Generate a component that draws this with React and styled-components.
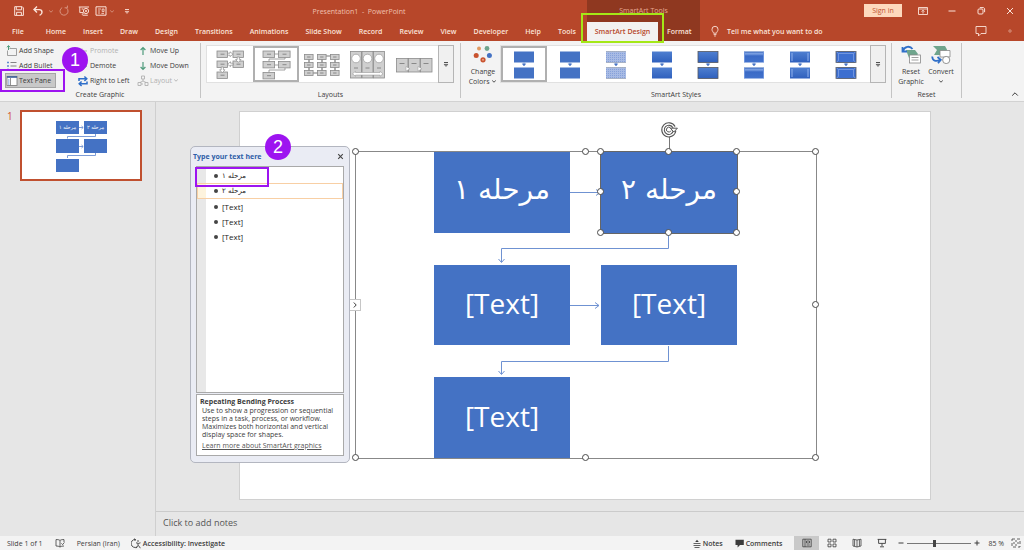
import React from 'react';
import styled, { createGlobalStyle } from 'styled-components';

const tabs = [
    'File', 'Home', 'Insert', 'Draw', 'Design', 'Transitions', 'Animations', 'Slide Show',
    'Record', 'Review', 'View', 'Developer', 'Help', 'Tools',
];

const bullets = [
    { text: 'مرحله ۱', persian: true },
    { text: 'مرحله ۲', persian: true, active: true },
    { text: '[Text]' },
    { text: '[Text]' },
    { text: '[Text]' },
];

const styleKinds = ['flat', 'flat', 'pattern', 'shade', 'outline', 'gloss', 'inset', 'bevel'];

const Icon = ({ w = 12, h = 12, children, ...rest }) => (
    <svg width={w} height={h} viewBox={`0 0 ${w} ${h}`} fill="none" stroke="currentColor" strokeWidth="1" aria-hidden="true" {...rest}>
        {children}
    </svg>
);

const Caret = () => (
    <Icon w={6} h={5}><path d="M1.2 1.5L3 3.2L4.8 1.5" strokeWidth="0.9" /></Icon>
);

const MoreIcon = () => (
    <Icon w={6} h={7}>
        <path d="M1 1.5H5" strokeWidth="0.9" />
        <path d="M1.3 3.4H4.7L3 5.4Z" strokeWidth="0.8" />
    </Icon>
);

const QuickAccess = () => (
    <QuickBar>
        <BarButton aria-label="Save" $w={19}>
            <Icon>
                <path d="M1.7 1.7H9.2L10.4 2.9V10.4H1.7Z" />
                <path d="M3.3 1.9V4.8H8.6V1.9M3.6 10.2V7.3H8.4V10.2" />
            </Icon>
        </BarButton>
        <BarButton aria-label="Undo" $w={19}>
            <Icon>
                <path d="M5 1.6L2 4.6L5 7.6M2.2 4.6H7.2C9 4.6 10 5.6 10 7.2C10 8.6 9 9.7 7.6 10.4" strokeWidth="1.4" />
            </Icon>
        </BarButton>
        <BarButton aria-label="Undo list" $w={7} $faded><Caret /></BarButton>
        <BarButton aria-label="Repeat" $w={20} $faded>
            <Icon>
                <path d="M4.2 2.6A4 4 0 1 0 8.6 3.1" />
                <path d="M6.6 2.8H9.4V0.6" />
            </Icon>
        </BarButton>
        <BarButton aria-label="From beginning" $w={20}>
            <Icon>
                <path d="M0.8 2H11M1.8 2.2V7.6H5M4 9.8L5.6 7.8M3.6 4H5.4" />
                <circle cx="8" cy="6" r="2.6" />
                <circle cx="8" cy="6" r="0.7" />
                <path d="M4.6 10.2H9.8" />
            </Icon>
        </BarButton>
        <BarButton aria-label="Form view" $w={14}>
            <Icon>
                <path d="M1 1.8H11V10.2H1Z" />
                <path d="M3 4H6M3 6H5M3 8H5M7.2 4H9V6.6H7.2Z M6.4 8.4H9" strokeWidth="0.8" />
            </Icon>
        </BarButton>
        <BarButton aria-label="Form view list" $w={8} $faded><Caret /></BarButton>
        <BarButton aria-label="Customize toolbar" $w={22}><MoreIcon /></BarButton>
    </QuickBar>
);

const LayoutThumb = ({ kind }) => {
    const box = (x, y, w, h) => <rect key={`${x}-${y}`} x={x} y={y} width={w} height={h} fill="#cfcfcf" stroke="#8b8b8b" strokeWidth="0.8" />;
    const dash = (x, y, w) => <path key={`d${x}-${y}`} d={`M${x} ${y}h${w}`} stroke="#777" strokeWidth="0.8" />;
    return (
        <Icon w={44} h={35}>
            {kind === 0 && (
                <>
                    {[[9, 4], [25, 4], [9, 14], [25, 14], [9, 25]].map(([x, y]) => [box(x, y, 10.5, 6.4), dash(x + 3.5, y + 3.2, 4)])}
                    <g fill="#fff" stroke="#8b8b8b" strokeWidth="0.7">
                        <path d="M19.5 6.2H22V4.8L25 7.2L22 9.6V8.2H19.5Z" />
                        <path d="M29.2 10H31.4V12.5H33L30.3 15.4L27.6 12.5H29.2Z" />
                        <path d="M25 16.2H22.5V14.8L19.5 17.2L22.5 19.6V18.2H25Z" />
                        <path d="M13.2 20H15.4V22.8H17L14.3 25.8L11.6 22.8H13.2Z" />
                    </g>
                </>
            )}
            {kind === 1 && (
                <>
                    <path d="M20 7H25M31 10V12H15V14.5M20 18H25M31 21V23H15V25.5" stroke="#8b8b8b" strokeWidth="0.8" />
                    {[[9, 4], [24.5, 4], [9, 14.5], [24.5, 14.5], [9, 25.5]].map(([x, y]) => [box(x, y, 11.6, 6.4), dash(x + 4, y + 3.2, 4)])}
                </>
            )}
            {kind === 2 && (
                <>
                    <path d="M9 9V26H22V9H35V26" stroke="#777" strokeWidth="1.2" />
                    {[4.5, 17.5, 30.5].map(x => [7.5, 15.5, 23.5].map(y => [box(x, y, 8.6, 5), dash(x + 2.6, y + 2.5, 3.4)]))}
                </>
            )}
            {kind === 3 && (
                <>
                    {[4.5, 16, 27.5].map(x => (
                        <g key={x}>
                            {box(x, 4.5, 11, 26.5)}
                            <circle cx={x + 5.5} cy="11.5" r="4.3" fill="#fff" stroke="#999" strokeWidth="0.7" />
                            {dash(x + 3.5, 21, 4)}
                        </g>
                    ))}
                    <path d="M6.5 26.8L9.5 24.3V25.5H34V24.3L37 26.8L34 29.3V28.1H9.5V29.3Z" fill="#fff" stroke="#999" strokeWidth="0.6" />
                </>
            )}
            {kind === 4 && (
                <>
                    {[4.5, 16.5, 28.5].map(x => (
                        <g key={x}>
                            {box(x, 11.5, 11.5, 13.5)}
                            {dash(x + 3, 16.5, 5)}
                        </g>
                    ))}
                    <path d="M14 19.5L18 21.8L14 24ZM26 19.5L30 21.8L26 24Z" fill="#fff" stroke="#999" strokeWidth="0.5" />
                </>
            )}
        </Icon>
    );
};

const StyleThumb = ({ kind }) => {
    const fills = { flat: '#4472c4', pattern: 'url(#dots)', shade: 'url(#shade)', outline: 'url(#shade)', gloss: 'url(#gloss)', inset: 'url(#shade)', bevel: '#3d6fd0' };
    return (
        <Icon w={44} h={35}>
            <defs>
                <pattern id="dots" width="2" height="2" patternUnits="userSpaceOnUse">
                    <rect width="2" height="2" fill="#a8bbe4" stroke="none" />
                    <rect width="1" height="1" fill="#86a1da" stroke="none" />
                </pattern>
                <linearGradient id="shade" x1="0" y1="0" x2="0" y2="1">
                    <stop offset="0" stopColor="#4f7fd0" />
                    <stop offset="1" stopColor="#2f60bd" />
                </linearGradient>
                <linearGradient id="gloss" x1="0" y1="0" x2="0" y2="1">
                    <stop offset="0" stopColor="#3463b8" />
                    <stop offset="0.2" stopColor="#7fa3e4" />
                    <stop offset="0.4" stopColor="#3a6ac6" />
                    <stop offset="1" stopColor="#4272cc" />
                </linearGradient>
            </defs>
            {[4.5, 20.5].map(y => (
                <g key={y}>
                    <rect x="12" y={y} width="20" height="11" fill={fills[kind]} stroke={kind === 'outline' || kind === 'bevel' ? '#55585f' : 'none'} strokeWidth="0.8" />
                    {kind === 'pattern' && <path d={`M12 ${y}H32M12 ${y + 11}H32`} stroke="#8c95a8" strokeWidth="0.6" />}
                    {kind === 'bevel' && <path d={`M14.5 ${y + 2}V${y + 9}M29.5 ${y + 2}V${y + 9}M12.5 ${y + 0.5}L14.5 ${y + 2}H29.5L31.5 ${y + 0.5}M12.5 ${y + 10.5}L14.5 ${y + 9}M31.5 ${y + 10.5}L29.5 ${y + 9}`} stroke="#7d9fe2" strokeWidth="0.8" />}
                    {kind === 'inset' && <path d={`M14 ${y + 1.5}V${y + 9.5}M30 ${y + 1.5}V${y + 9.5}`} stroke="#8fb0ee" />}
                    {kind === 'gloss' && <path d={`M12.5 ${y + 10.5}V${y + 0.5}M31.5 ${y + 0.5}V${y + 10.5}`} stroke="#6d94de" />}
                </g>
            ))}
            <path d="M22 15.5V17M20.3 16.8H23.7L22 19Z" fill="#4472c4" stroke="#4472c4" strokeWidth="0.5" />
        </Icon>
    );
};

const CreateGraphic = () => (
    <Group $w={201}>
        <CommandGrid>
            <Command>
                <Icon><path d="M3.5 3.5H10.5V10.5H1.5V5.5" stroke="#8a8a8a" strokeWidth="0.8" /><path d="M2.5 5V0.8M0.8 2.3L2.5 0.7L4.2 2.3" stroke="#4f9b7c" /></Icon>
                Add Shape
            </Command>
            <Command disabled>
                <Icon><path d="M10 6H2.5M5 3.5L2.5 6L5 8.5" /></Icon>
                Promote
            </Command>
            <Command>
                <Icon><path d="M6 10V2.5M3.6 5L6 2.5L8.4 5" stroke="#4f9b7c" strokeWidth="1.2" /></Icon>
                Move Up
            </Command>
            <Command>
                <Icon><path d="M4.5 2.5H10.5M4.5 6H10.5M4.5 9.5H10.5" stroke="#777" strokeWidth="0.9" /><path d="M1.2 2.5H2.8M1.2 6H2.8M1.2 9.5H2.8" stroke="#3b6fc4" strokeWidth="1.6" /></Icon>
                Add Bullet
            </Command>
            <Command>
                <Icon><path d="M2 6H9.5M7 3.5L9.5 6L7 8.5" stroke="#4f9b7c" /></Icon>
                Demote
            </Command>
            <Command>
                <Icon><path d="M6 2V9.5M3.6 7L6 9.5L8.4 7" stroke="#4f9b7c" strokeWidth="1.2" /></Icon>
                Move Down
            </Command>
            <Command $pressed aria-pressed="true">
                <Icon><rect x="1" y="1.5" width="10" height="9" fill="#fff" stroke="#777" strokeWidth="0.8" /><path d="M1 2H11" stroke="#3b5f9c" strokeWidth="1.6" /><path d="M4.5 3V10.5" stroke="#777" strokeWidth="0.8" /><path d="M2 5H3.5M2 7H3.5M2 9H3.5" stroke="#3b6fc4" strokeWidth="0.8" /></Icon>
                Text Pane
            </Command>
            <Command>
                <Icon><path d="M2 6V3.8H9.5M7.4 1.5L9.8 3.8L7.4 6" stroke="#2f6fc9" strokeWidth="1.5" /><path d="M10 6.5V8.8H2.5M4.6 6.5L2.2 8.8L4.6 11" stroke="#2f6fc9" strokeWidth="1.5" /></Icon>
                Right to Left
            </Command>
            <Command disabled>
                <Icon><path d="M4.5 1H7.5V4H4.5ZM1 7.5H4V10.5H1ZM8 7.5H11V10.5H8ZM6 4V6M6 9H4M6 6L3 7.5M6 6L9 7.5" strokeWidth="0.9" /></Icon>
                Layout <Caret />
            </Command>
        </CommandGrid>
        <GroupLabel>Create Graphic</GroupLabel>
        <PaneMark />
        <StepBadge $left={62} $top={4}>1</StepBadge>
    </Group>
);

const Diagram = () => (
    <Frame>
        <Connectors viewBox="0 0 461 306" fill="none" stroke="#6f92d2" aria-hidden="true">
            <path d="M214 40.5H244M240 37.5L244 40.5L240 43.5" />
            <path d="M312.5 82V96.5H145.5V110M142.5 107L145.5 110.5L148.5 107" />
            <path d="M214 153.5H243M239 150.5L243 153.5L239 156.5" />
            <path d="M312.5 194V209.5H145.5V222M142.5 219L145.5 222.5L148.5 219" />
        </Connectors>
        <Nodes>
            <Node $persian dir="rtl">مرحله ۱</Node>
            <Node $persian $selected dir="rtl">
                مرحله ۲
                <RotateStem />
                <RotateHandle w={17} h={16}>
                    <path d="M13.6 8.6A5.8 5.8 0 1 1 13 5.2" stroke="#555" strokeWidth="3.6" />
                    <path d="M13.6 8.6A5.8 5.8 0 1 1 13 5.2" stroke="#fff" strokeWidth="1.4" />
                    <path d="M9.4 6.2H16.4L12.8 10Z" fill="#fff" stroke="#555" />
                    <path d="M10 8.6A2.4 2.4 0 1 1 9.6 6" stroke="#555" />
                </RotateHandle>
                {['0%', '50%', '100%'].map(x => ['0%', '50%', '100%'].map(y => (
                    x === '50%' && y === '50%' ? null : <Handle key={x + y} $x={x} $y={y} />
                )))}
            </Node>
            <Node>[Text]</Node>
            <Node>[Text]</Node>
            <Node>[Text]</Node>
        </Nodes>
        {[['0%', '0%'], ['50%', '0%'], ['100%', '0%'], ['100%', '50%'], ['0%', '100%'], ['50%', '100%'], ['100%', '100%']].map(([x, y]) => (
            <Handle key={x + y} $x={x} $y={y} />
        ))}
        <PaneToggle aria-label="Toggle text pane">
            <Icon w={6} h={8}><path d="M1.8 1.5L4.2 4L1.8 6.5" /></Icon>
        </PaneToggle>
    </Frame>
);

const TextPane = () => (
    <Pane>
        <PaneHeader>
            Type your text here
            <PaneClose aria-label="Close">
                <Icon w={7} h={7}><path d="M1.2 1.2L5.8 5.8M5.8 1.2L1.2 5.8" strokeWidth="1.1" /></Icon>
            </PaneClose>
        </PaneHeader>
        <BulletList>
            {bullets.map((b, i) => (
                <Bullet key={i} $active={b.active} $persian={b.persian}>
                    <span dir={b.persian ? 'rtl' : 'ltr'}>{b.text}</span>
                </Bullet>
            ))}
        </BulletList>
        <About>
            <AboutTitle>Repeating Bending Process</AboutTitle>
            <AboutText>
                Use to show a progression or sequential<br />
                steps in a task, process, or workflow.<br />
                Maximizes both horizontal and vertical<br />
                display space for shapes.
            </AboutText>
            <AboutLink href="#learn">Learn more about SmartArt graphics</AboutLink>
        </About>
        <RowMark />
        <StepBadge $left={74} $top={-13}>2</StepBadge>
    </Pane>
);

const SlideThumb = () => (
    <ThumbButton aria-label="Slide 1">
        <svg viewBox="0 0 118 67" width="118" height="67" aria-hidden="true">
            <g fill="#4472c4">
                <rect x="34" y="9" width="23" height="13" />
                <rect x="62" y="9" width="23" height="13" />
                <rect x="34" y="27" width="23" height="14" />
                <rect x="62" y="27" width="23" height="14" />
                <rect x="34" y="47" width="23" height="13" />
            </g>
            <path d="M57 15.5H61M59.5 14L61.2 15.5L59.5 17M73.5 22V24.5H45.5V26.5M57 34.5H61M59.5 33L61.2 34.5L59.5 36M73.5 41V43.5H45.5V46" fill="none" stroke="#6f92d2" strokeWidth="0.9" />
            <g fill="#fff" fontFamily='"DejaVu Sans", sans-serif' fontSize="5" textAnchor="middle" direction="rtl">
                <text x="45.5" y="17">مرحله ۱</text>
                <text x="73.5" y="17">مرحله ۲</text>
            </g>
        </svg>
    </ThumbButton>
);

const App = () => (
    <Window>
        <GlobalStyle />
        <Header>
            <HeaderMain>
                <TitleRow>
                    <QuickAccess />
                    <Title>Presentation1&nbsp; -&nbsp; PowerPoint</Title>
                </TitleRow>
                <Tabs>
                    {tabs.map(t => <Tab key={t}>{t}</Tab>)}
                </Tabs>
            </HeaderMain>
            <HeaderContext>
                <ContextTitle>SmartArt Tools</ContextTitle>
                <ContextTabs>
                    <ActiveTab>SmartArt Design</ActiveTab>
                    <Tab>Format</Tab>
                </ContextTabs>
                <TabMark />
            </HeaderContext>
            <HeaderSide>
                <WindowRow>
                    <SignIn>Sign in</SignIn>
                    <BarButton aria-label="Ribbon display options" $w={29}>
                        <Icon><path d="M1.5 2.5H10.5V9.5H1.5ZM1.5 4H10.5M6 8.6V5.4M4.6 6.6L6 5.2L7.4 6.6" strokeWidth="0.9" /></Icon>
                    </BarButton>
                    <BarButton aria-label="Minimize" $w={29}><Icon><path d="M2.5 6H9.5" /></Icon></BarButton>
                    <BarButton aria-label="Restore" $w={29}>
                        <Icon><rect x="3" y="4" width="5" height="5" rx="1" /><path d="M4.8 2.6H8C9 2.6 9.6 3.2 9.6 4V7.2" /></Icon>
                    </BarButton>
                    <BarButton aria-label="Close" $w={29}><Icon><path d="M3 3L9 9M9 3L3 9" /></Icon></BarButton>
                </WindowRow>
                <TellRow>
                    <TellMe>
                        <Icon><path d="M4.5 8.2C4.5 7 3 6.4 3 4.3A3 3 0 0 1 9 4.3C9 6.4 7.5 7 7.5 8.2ZM4.6 9.6H7.4M5.2 11H6.8" strokeWidth="0.9" /></Icon>
                        Tell me what you want to do
                    </TellMe>
                    <BarButton aria-label="Comments" $w={29}><Icon><path d="M1 1.5H11V8.5H6L3.5 11V8.5H1Z" strokeWidth="0.9" /></Icon></BarButton>
                    <BarButton aria-label="Feedback" $w={29} $faded><Icon><circle cx="6" cy="6" r="1.2" /></Icon></BarButton>
                </TellRow>
            </HeaderSide>
        </Header>

        <Ribbon>
            <CreateGraphic />
            <Group $w={260}>
                <GalleryRow>
                    <Gallery>
                        {[0, 1, 2, 3, 4].map(k => (
                            <GalleryItem key={k} $selected={k === 1} aria-label={`Layout ${k + 1}`}><LayoutThumb kind={k} /></GalleryItem>
                        ))}
                        <GalleryMore aria-label="More layouts"><MoreIcon /></GalleryMore>
                    </Gallery>
                </GalleryRow>
                <GroupLabel>Layouts</GroupLabel>
            </Group>
            <Group $w={431}>
                <GalleryRow>
                    <BigButton>
                        <Icon w={20} h={19} stroke="none">
                            <circle cx="6" cy="3.5" r="2" fill="#e09a62" /><circle cx="14" cy="3.5" r="2.4" fill="#6fa58d" />
                            <circle cx="3.2" cy="10.5" r="2.5" fill="#c9532f" /><circle cx="16.4" cy="10.5" r="2.5" fill="#4472c4" />
                            <circle cx="10" cy="14.8" r="2.6" fill="#c9532f" /><circle cx="10" cy="14.8" r="1" fill="#e9a488" />
                        </Icon>
                        <span>Change<br />Colors <Caret /></span>
                    </BigButton>
                    <Gallery>
                        {styleKinds.map((k, i) => (
                            <GalleryItem key={i} $selected={i === 0} aria-label={`Style ${i + 1}`}><StyleThumb kind={k} /></GalleryItem>
                        ))}
                        <GalleryMore aria-label="More styles"><MoreIcon /></GalleryMore>
                    </Gallery>
                </GalleryRow>
                <GroupLabel>SmartArt Styles</GroupLabel>
            </Group>
            <Group $w={70}>
                <ResetRow>
                    <BigButton>
                        <Icon w={20} h={19}>
                            <path d="M5 5H14L17 9L14 13H8Z" fill="#6fa58d" stroke="none" />
                            <rect x="8.5" y="10" width="11" height="8" fill="#fff" stroke="#888" strokeWidth="0.8" />
                            <path d="M10.5 12.5H17.5M10.5 15H17.5" stroke="#888" strokeWidth="0.8" />
                            <path d="M1.5 2V6.5H6M1.8 6.2C3.5 1 9 0.5 11.5 4" stroke="#2f6fc9" strokeWidth="1.8" />
                        </Icon>
                        <span>Reset<br />Graphic</span>
                    </BigButton>
                    <BigButton>
                        <Icon w={20} h={19}>
                            <path d="M2 1H14L16 4.5L14 10H3L6 5Z" fill="#6fa58d" stroke="none" />
                            <path d="M9 5.5H19V12H9Z" fill="#fff" stroke="#888" strokeWidth="0.8" />
                            <circle cx="15.2" cy="15" r="3.6" fill="#fff" stroke="#888" strokeWidth="0.9" />
                            <path d="M1.2 11.5C1.5 16 5 16.8 9 15M6.5 12L9.8 14.8L7 18.2" stroke="#2f6fc9" strokeWidth="1.8" />
                        </Icon>
                        <span>Convert<br /><Caret /></span>
                    </BigButton>
                </ResetRow>
                <GroupLabel>Reset</GroupLabel>
            </Group>
            <Collapse aria-label="Collapse the ribbon"><Icon w={8} h={6}><path d="M1.2 4.6L4 1.8L6.8 4.6" /></Icon></Collapse>
        </Ribbon>

        <Workspace>
            <Slides>
                <SlideNumber>1</SlideNumber>
                <SlideThumb />
            </Slides>
            <Editor>
                <Stage>
                    <Slide>
                        <Diagram />
                    </Slide>
                    <TextPane />
                </Stage>
                <NotesBox aria-label="Notes" placeholder="Click to add notes" rows={1} />
            </Editor>
        </Workspace>

        <StatusBar>
            <StatusGroup $gap={11}>
                <span>Slide 1 of 1</span>
                <StatusButton aria-label="Spelling">
                    <Icon w={12} h={10}><path d="M6 2.5V9M6 2.5C5 1.6 3.5 1.5 2 1.6V8C3.5 8 5 8.2 6 9C7 8.2 8.5 8 10 8M6 2.5C7 1.6 8.5 1.5 10 1.6V4M7.4 5.4L8.6 6.6L10.4 4.4" strokeWidth="0.8" /></Icon>
                </StatusButton>
                <span>Persian (Iran)</span>
                <StatusButton $strong>
                    <Icon w={10} h={11}><path d="M4.5 1.5A4 4 0 1 0 6 9M4.5 1.5L3 0.8M4.5 1.5L3.8 3M5 4.8L7.5 5.4L9.5 4.8M7 5.4V7.4L5.2 10.2M7.4 7.4L9.4 10.2" strokeWidth="0.9" /><circle cx="7" cy="3" r="0.8" fill="currentColor" stroke="none" /></Icon>
                    Accessibility: Investigate
                </StatusButton>
            </StatusGroup>
            <StatusGroup $gap={4}>
                <Toggles>
                    <StatusButton $strong>
                        <Icon w={8} h={9}><path d="M0.5 4.5H7.5M0.5 6.5H7.5M1.5 8.5H6.5" strokeWidth="0.8" /><path d="M4 0.8L5.8 3H2.2Z" fill="currentColor" stroke="none" /></Icon>
                        Notes
                    </StatusButton>
                    <StatusButton $strong>
                        <Icon w={9} h={9}><path d="M0.5 0.8H8.8V6H5L2.6 8.4V6H0.5Z" fill="currentColor" stroke="none" /></Icon>
                        Comments
                    </StatusButton>
                </Toggles>
                <Views>
                    <ViewButton aria-label="Normal" $on><Icon w={10} h={10}><path d="M0.8 1.2H9.2V8.8H0.8ZM3 1.2V8.8M4.5 3H7.5V5H4.5ZM4.5 7H7.8" strokeWidth="0.8" /></Icon></ViewButton>
                    <ViewButton aria-label="Slide sorter"><Icon w={10} h={10}><path d="M1 1.2H4V4H1ZM6 1.2H9V4H6ZM1 6H4V8.8H1ZM6 6H9V8.8H6Z" strokeWidth="0.8" /></Icon></ViewButton>
                    <ViewButton aria-label="Reading view"><Icon w={10} h={10}><path d="M5 2V9L1 8V1.2L5 2L9 1.2V8L5 9M2.6 2V8M7.4 2V8" strokeWidth="0.8" /></Icon></ViewButton>
                    <ViewButton aria-label="Slide show"><Icon w={10} h={10}><path d="M0.6 1.4H9.4M1.6 1.4V5.4H8.4V1.4M5 5.4V8M3 8.8H7" strokeWidth="0.9" /></Icon></ViewButton>
                </Views>
                <Zoom>
                    <StatusButton aria-label="Zoom out"><Icon w={6} h={8}><path d="M0.5 4H5.5" /></Icon></StatusButton>
                    <ZoomSlider type="range" min="10" max="190" defaultValue="85" aria-label="Zoom" />
                    <StatusButton aria-label="Zoom in"><Icon w={6} h={8}><path d="M0.5 4H5.5M3 1.5V6.5" /></Icon></StatusButton>
                    <ZoomValue>85 %</ZoomValue>
                    <StatusButton aria-label="Fit to window">
                        <Icon w={10} h={10}><path d="M1 1H9V9H1Z" strokeWidth="0.8" strokeDasharray="3 2" /><path d="M5 2V4M5 6V8M2 5H4M6 5H8" strokeWidth="0.8" /></Icon>
                    </StatusButton>
                </Zoom>
            </StatusGroup>
        </StatusBar>
    </Window>
);

export default App;


const GlobalStyle = createGlobalStyle`
    * {
        box-sizing: border-box;
    }

    body {
        margin: 0;
        font-family: "Open Sans", "Noto Sans", sans-serif;
        font-size: 7px;
        font-weight: 500;
        color: #3c3c3c;
    }

    button {
        font: inherit;
        color: inherit;
        border: none;
        padding: 0;
        background: none;
        white-space: nowrap;
        cursor: pointer;
    }

    svg {
        flex-shrink: 0;
    }
`;

const Window = styled.div`
    display: flex;
    flex-direction: column;
    min-height: 100vh;
    background: #e6e6e6;
`;

const Header = styled.header`
    display: grid;
    grid-template-columns: 587px 113px 1fr;
    background: #b7472a;
    color: #fbe3d9;
`;

const HeaderMain = styled.div`
    display: flex;
    flex-direction: column;
`;

const TitleRow = styled.div`
    display: flex;
    align-items: center;
    height: 22px;
`;

const QuickBar = styled.div`
    display: flex;
    padding-left: 9px;
`;

const BarButton = styled.button`
    display: flex;
    align-items: center;
    justify-content: center;
    width: ${p => p.$w}px;
    height: 16px;
    opacity: ${p => (p.$faded ? 0.5 : 1)};
`;

const Title = styled.span`
    flex: 1;
    padding-right: 7px;
    text-align: center;
    color: #f0c0b0;
    white-space: nowrap;
`;

const Tabs = styled.nav`
    display: flex;
    justify-content: space-between;
    height: 19px;
    padding: 0 11px 0 12px;

    > :first-child {
        margin-right: 5px;
    }
`;

const Tab = styled.button`
    font-weight: 600;
    height: 19px;
`;

const HeaderContext = styled.div`
    position: relative;
    background: #8f3820;
`;

const ContextTitle = styled.div`
    height: 22px;
    line-height: 21px;
    text-align: center;
    color: #e6a892;
`;

const ContextTabs = styled.div`
    display: flex;
    gap: 9px;
`;

const ActiveTab = styled(Tab)`
    width: 71px;
    background: #f3f2f1;
    color: #b7472a;
`;

const TabMark = styled.div`
    position: absolute;
    left: -6px;
    top: 13px;
    width: 83px;
    height: 30px;
    border: 2px solid #a4e817;
    z-index: 2;
`;

const HeaderSide = styled.div`
    display: flex;
    flex-direction: column;
`;

const WindowRow = styled.div`
    display: flex;
    align-items: center;
    justify-content: flex-end;
    height: 21px;
`;

const SignIn = styled.button`
    width: 38px;
    height: 13px;
    margin-right: 6px;
    background: #fdd9bd;
    color: #c0542f;
`;

const TellRow = styled.div`
    display: flex;
    align-items: center;
    height: 20px;
`;

const TellMe = styled.button`
    display: flex;
    align-items: center;
    gap: 6px;
    flex: 1;
    padding-left: 9px;
    font-weight: 600;
`;

const Ribbon = styled.section`
    display: flex;
    height: 61px;
    padding-top: 2px;
    background: #f3f3f3;
    border-bottom: 1px solid #d2d2d2;
`;

const Group = styled.div`
    position: relative;
    display: flex;
    flex-direction: column;
    width: ${p => p.$w}px;
    height: 55px;
    border-right: 1px solid #c4c4c4;
`;

const GroupLabel = styled.div`
    margin-top: auto;
    height: 10px;
    line-height: 13px;
    text-align: center;
`;

const CommandGrid = styled.div`
    display: grid;
    grid-template-columns: 71px 60px 60px;
    grid-auto-rows: 15px;
    padding-left: 6px;
`;

const Command = styled.button`
    display: flex;
    align-items: center;
    justify-self: start;
    align-self: center;
    gap: 1px;
    height: 13px;
    padding-right: 4px;
    background: ${p => (p.$pressed ? '#c8c8c8' : 'none')};
    box-shadow: ${p => (p.$pressed ? '0 0 0 1px #a5a5a5' : 'none')};

    &:disabled {
        color: #b1b1b1;
    }
`;

const PaneMark = styled.div`
    position: absolute;
    left: 0;
    top: 26px;
    width: 65px;
    height: 23px;
    border: 2px solid #9d14f0;
`;

const StepBadge = styled.div`
    position: absolute;
    left: ${p => p.$left}px;
    top: ${p => p.$top}px;
    width: 26px;
    height: 26px;
    border-radius: 50%;
    background: #9d14f0;
    color: #fff;
    font-family: "Liberation Sans", Arial, sans-serif;
    font-size: 18px;
    line-height: 26px;
    text-align: center;
    z-index: 3;
`;

const GalleryRow = styled.div`
    display: flex;
    padding-left: 5px;
`;

const Gallery = styled.div`
    display: flex;
    align-self: flex-start;
    height: 38px;
    margin-top: 2px;
    background: #fff;
    border: 1px solid #e1e1e1;
    border-right: none;
`;

const GalleryItem = styled.button`
    display: flex;
    align-items: center;
    justify-content: center;
    width: 46px;
    height: 36px;
    box-shadow: ${p => (p.$selected ? 'inset 0 0 0 2px #b0b0b0' : 'none')};
`;

const GalleryMore = styled.button`
    display: flex;
    align-items: center;
    justify-content: center;
    width: 16px;
    height: 38px;
    margin: -1px 0 0 1px;
    background: #f0f0f0;
    border: 1px solid #b5b5b5;
`;

const BigButton = styled.button`
    display: flex;
    flex-direction: column;
    align-items: center;
    width: 34px;
    padding-top: 2px;
    line-height: 10px;

    > span {
        margin-top: 3px;
    }
`;

const ResetRow = styled.div`
    display: flex;
    padding-left: 2px;

    ${BigButton} + ${BigButton} {
        margin-left: -4px;
    }
`;

const Collapse = styled.button`
    align-self: flex-end;
    margin: 0 5px 2px auto;
`;

const Workspace = styled.main`
    display: flex;
    flex: 1;
`;

const Slides = styled.aside`
    display: flex;
    align-items: flex-start;
    width: 156px;
    padding: 8px 0 0 7px;
    border-right: 1px solid #cfcfcf;
`;

const SlideNumber = styled.span`
    width: 13px;
    font-size: 10px;
    line-height: 12px;
    color: #d3532d;
`;

const ThumbButton = styled.button`
    display: flex;
    background: #fff;
    border: 2px solid #c0502f;
`;

const Editor = styled.section`
    display: flex;
    flex-direction: column;
    flex: 1;
`;

const Stage = styled.div`
    position: relative;
    display: flex;
    flex: 1;
    padding: 9px 93px 11px 83px;
`;

const Slide = styled.div`
    position: relative;
    flex: 1;
    min-height: 389px;
    background: #fff;
    border: 1px solid #d0d0d0;
`;

const Frame = styled.div`
    position: absolute;
    left: 115px;
    top: 39px;
    width: 462px;
    height: 308px;
    border: 1px solid #888;
`;

const Handle = styled.i`
    position: absolute;
    left: ${p => p.$x};
    top: ${p => p.$y};
    width: 7px;
    height: 7px;
    margin: -4px 0 0 -4px;
    border: 1px solid #4a4a4a;
    border-radius: 50%;
    background: #fff;
`;

const Connectors = styled.svg`
    position: absolute;
    left: 0;
    top: 0;
    width: 461px;
    height: 306px;
`;

const Nodes = styled.div`
    display: grid;
    grid-template-columns: 136px 136px;
    grid-template-rows: repeat(3, 1fr);
    gap: 32px 31px;
    height: 100%;
    padding-left: 78px;
`;

const Node = styled.div`
    position: relative;
    display: flex;
    align-items: center;
    justify-content: center;
    padding-bottom: 4px;
    background: #4472c4;
    outline: ${p => (p.$selected ? '1px solid #666' : 'none')};
    color: #fff;
    font-family: ${p => (p.$persian ? '"DejaVu Sans"' : '"Open Sans"')}, sans-serif;
    font-size: 28px;
    line-height: 36px;
`;

const RotateStem = styled.i`
    position: absolute;
    left: 50%;
    top: -16px;
    height: 16px;
    border-left: 1px solid #777;
`;

const RotateHandle = styled(Icon)`
    position: absolute;
    left: 60px;
    top: -30px;
`;

const PaneToggle = styled.button`
    position: absolute;
    left: -7px;
    top: 147px;
    display: flex;
    align-items: center;
    justify-content: center;
    width: 12px;
    height: 12px;
    background: #fff;
    border: 1px solid #c6c6c6;
`;

const Pane = styled.div`
    position: absolute;
    left: 34px;
    top: 44px;
    display: flex;
    flex-direction: column;
    gap: 1px;
    width: 160px;
    height: 317px;
    padding: 0 5px 6px;
    background: #eaecf4;
    border: 1px solid #b3b6c0;
    border-radius: 5px;
`;

const PaneHeader = styled.div`
    display: flex;
    align-items: center;
    justify-content: space-between;
    height: 18px;
    margin-left: -3px;
    font-weight: 700;
    color: #2f5ea8;
`;

const PaneClose = styled.button`
    display: flex;
    color: #444;
`;

const BulletList = styled.ul`
    flex: 1;
    margin: 0;
    padding: 1px 0 0;
    list-style: none;
    background: linear-gradient(to right, #e8e8e8 9px, #fff 9px);
    border: 1px solid #a9a9a9;
`;

const Bullet = styled.li`
    display: flex;
    align-items: center;
    gap: 4px;
    height: ${p => (p.$active ? 16 : 15)}px;
    padding-left: 16px;
    border: 1px solid ${p => (p.$active ? '#f8cfa4' : 'transparent')};
    background: ${p => (p.$active ? 'linear-gradient(to right, #fdf3dd 8px, #fff 8px)' : 'none')};
    font-family: ${p => (p.$persian ? '"DejaVu Sans"' : '"Open Sans"')}, sans-serif;
    font-size: ${p => (p.$persian ? 7 : 8)}px;
    color: #222;

    &::before {
        content: '';
        width: 4px;
        height: 4px;
        border-radius: 50%;
        background: #444;
    }
`;

const About = styled.div`
    height: 62px;
    padding: 2px 3px;
    background: #fff;
    border: 1px solid #a9a9a9;
    white-space: nowrap;
`;

const AboutTitle = styled.div`
    font-weight: 700;
    line-height: 10px;
`;

const AboutText = styled.p`
    margin: 0 0 2px 2px;
    line-height: 8px;
`;

const AboutLink = styled.a`
    margin-left: 2px;
    line-height: 10px;
    color: #555;
`;

const RowMark = styled.div`
    position: absolute;
    left: 4px;
    top: 20px;
    width: 74px;
    height: 20px;
    border: 2px solid #9d14f0;
`;

const NotesBox = styled.textarea`
    height: 25px;
    padding: 3px 7px;
    border: none;
    border-top: 1px solid #cbcbcb;
    background: transparent;
    font-family: inherit;
    font-size: 9px;
    line-height: 15px;
    resize: none;
    outline: none;

    &::placeholder {
        color: #555;
    }
`;

const StatusBar = styled.footer`
    display: flex;
    justify-content: space-between;
    height: 14px;
    padding: 0 3px 0 7px;
    background: #f3f3f3;
`;

const StatusGroup = styled.div`
    display: flex;
    align-items: center;
    gap: ${p => p.$gap}px;
`;

const StatusButton = styled.button`
    display: flex;
    align-items: center;
    gap: 2px;
    font-weight: ${p => (p.$strong ? 600 : 400)};
`;

const Toggles = styled.div`
    display: flex;
    gap: 12px;
    margin-right: 8px;
`;

const Views = styled.div`
    display: flex;
`;

const ViewButton = styled.button`
    display: flex;
    align-items: center;
    justify-content: center;
    width: 25px;
    height: 14px;
    background: ${p => (p.$on ? '#c9c9c9' : 'none')};
`;

const Zoom = styled.div`
    display: flex;
    align-items: center;
    gap: 3px;
`;

const ZoomSlider = styled.input`
    appearance: none;
    width: 64px;
    height: 8px;
    margin: 0;
    background: linear-gradient(#777, #777) center / 100% 1px no-repeat;

    &::-webkit-slider-thumb {
        appearance: none;
        width: 3px;
        height: 7px;
        background: #444;
    }
`;

const ZoomValue = styled.span`
    margin: 0 4px 0 5px;
`;
